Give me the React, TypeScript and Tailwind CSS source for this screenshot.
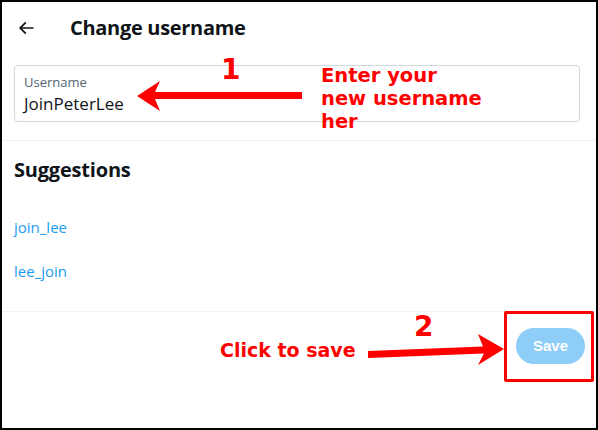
import React from 'react';

const suggestions = ['join_lee', 'lee_join'];

const App: React.FC = () => {
  return (
    <div className="relative w-[598px] h-[430px] bg-white border-2 border-black overflow-hidden font-['Open_Sans',sans-serif] text-[#0f1419]">
      {/* header */}
      <div className="flex items-center h-[51px] pl-[14px]">
        <svg viewBox="0 0 24 24" className="w-[20px] h-[20px] text-[#0f1419]" fill="currentColor">
          <path d="M7.414 13l5.043 5.04-1.414 1.42L3.586 12l7.457-7.46 1.414 1.42L7.414 11H21v2H7.414z" />
        </svg>
        <h1 className="ml-[34px] text-[20px] font-bold leading-6 tracking-[-0.3px]">Change username</h1>
      </div>

      {/* input */}
      <div className="ml-[12px] mr-[16px] mt-[12px] h-[57px] border border-[#cfd9de] rounded-[4px] px-[9px] pt-[8px]">
        <div className="text-[13px] leading-4 text-[#536471]">Username</div>
        <div className="text-[17px] leading-6 mt-[2px]">JoinPeterLee</div>
      </div>

      <div className="mt-[18px] h-px bg-[#eff3f4]" />

      {/* suggestions */}
      <div className="px-[12px] pt-[17px]">
        <h2 className="text-[20px] font-bold leading-6 tracking-[-0.2px]">Suggestions</h2>
        <div className="flex flex-col mt-[35px] gap-[24px]">
          {suggestions.map((s) => (
            <a key={s} href="#" className="text-[15px] leading-5 text-[#1d9bf0]">
              {s}
            </a>
          ))}
        </div>
      </div>

      <div className="mt-[30px] h-px bg-[#eff3f4]" />

      {/* footer */}
      <div className="flex justify-end pr-[11px] pt-[16px]">
        <button className="w-[69px] h-[36px] rounded-full bg-[#8ecdf8] text-white text-[15px] font-bold font-['Liberation_Sans',sans-serif]">
          Save
        </button>
      </div>

      {/* annotations */}
      <svg className="absolute left-[-2px] top-[-2px] w-[598px] h-[430px] pointer-events-none" viewBox="0 0 598 430">
        <polygon fill="#ff0000" points="302,92 155,92 160,81 137,96 160,111 155,99 302,99" />
        <polygon fill="#ff0000" points="368,351 483,346.5 478,334 504,349 478,365 484,353.5 368,358" />
      </svg>
      <div className="absolute left-[502px] top-[309px] w-[90px] h-[71px] border-[3px] border-[#ff0000] rounded-[2px]" />
      <div className="absolute left-[219px] top-[52px] text-[28px] leading-8 font-bold text-[#ff0000] font-['DejaVu_Sans',sans-serif]">1</div>
      <div className="absolute left-[412px] top-[309px] text-[28px] leading-8 font-bold text-[#ff0000] font-['DejaVu_Sans',sans-serif]">2</div>
      <div className="absolute left-[319px] top-[62px] text-[19.5px] leading-[23px] font-bold text-[#ff0000] font-['DejaVu_Sans',sans-serif]">
        Enter your
        <br />
        new username
        <br />
        her
      </div>
      <div className="absolute left-[218px] top-[337px] text-[19px] leading-[23px] font-bold text-[#ff0000] font-['DejaVu_Sans',sans-serif]">
        Click to save
      </div>
    </div>
  );
};

export default App;
